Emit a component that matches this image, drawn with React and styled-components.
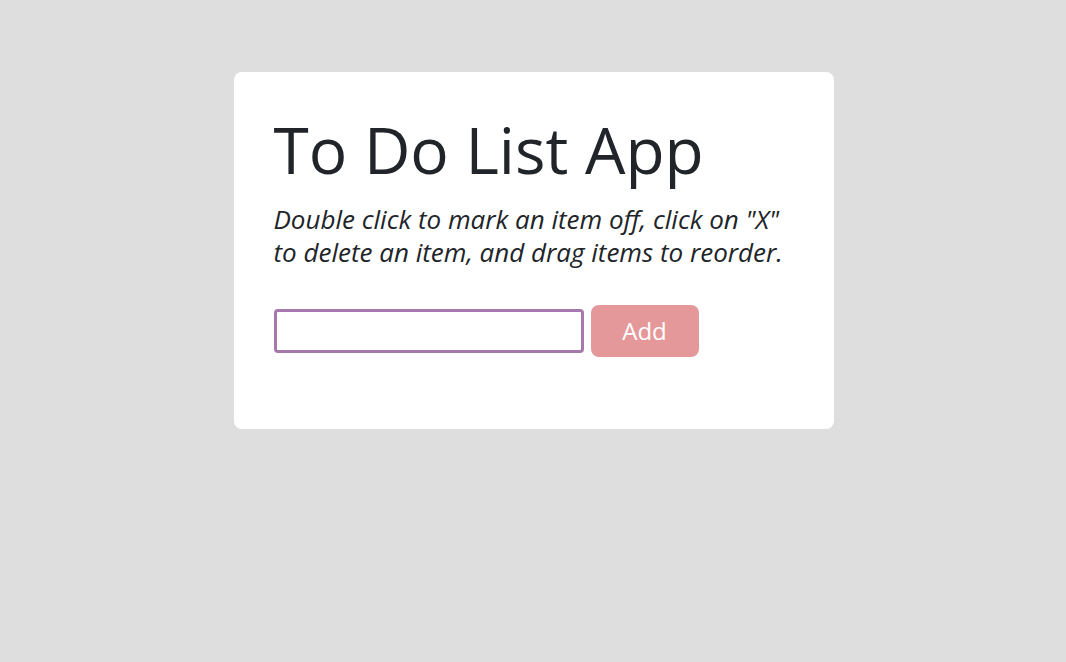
import React from "react";
import styled, { createGlobalStyle } from "styled-components";

const GlobalStyle = createGlobalStyle`
  body {
    margin: 0;
    background: #dedede;
    font-family: "Open Sans", "Liberation Sans", sans-serif;
    color: #212529;
  }
`;

const Page = styled.div`
  min-height: 662px;
  display: flex;
  justify-content: center;
  align-items: flex-start;
  padding: 72px 0 0 1px;
  box-sizing: border-box;
`;

const Card = styled.div`
  width: 600px;
  height: 357px;
  box-sizing: border-box;
  background: #fff;
  border-radius: 8px;
  padding: 40px;
`;

const Title = styled.h1`
  margin: 0 0 14px;
  font-size: 64px;
  font-weight: 400;
  line-height: 1.2;
`;

const Hint = styled.p`
  margin: 0 0 36px;
  font-size: 26px;
  font-style: italic;
  line-height: 33px;
`;

const Form = styled.form`
  display: flex;
  align-items: center;
  gap: 7px;
`;

const Input = styled.input`
  width: 310px;
  height: 44px;
  box-sizing: border-box;
  border: 3px solid #a678ab;
  border-radius: 4px;
  padding: 0 6px;
  font-family: inherit;
  font-size: 24px;
  caret-color: #000;
  outline: none;
`;

const Button = styled.button`
  width: 108px;
  height: 52px;
  border: none;
  border-radius: 8px;
  background: #e4989a;
  color: #fff;
  font-family: inherit;
  font-size: 24px;
`;

export default function App() {
  return (
    <>
      <GlobalStyle />
      <Page>
        <Card>
          <Title>To Do List App</Title>
          <Hint>
            Double click to mark an item off, click on "X" to delete an item,
            and drag items to reorder.
          </Hint>
          <Form onSubmit={(e) => e.preventDefault()}>
            <Input type="text" autoFocus />
            <Button type="submit">Add</Button>
          </Form>
        </Card>
      </Page>
    </>
  );
}
